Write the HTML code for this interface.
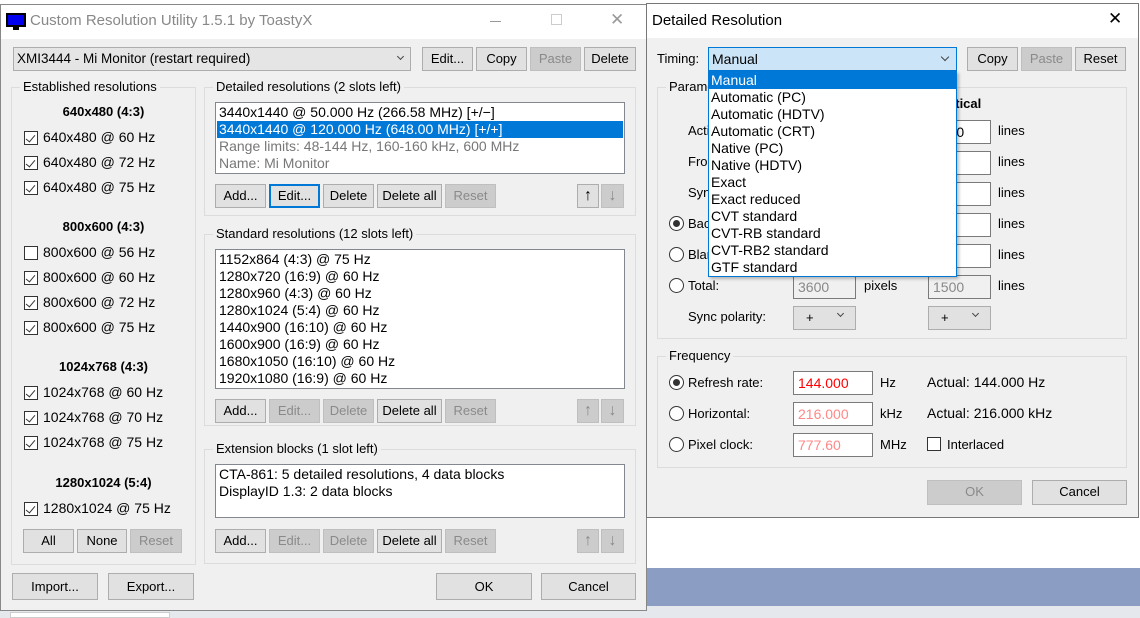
<!DOCTYPE html>
<html><head><meta charset="utf-8"><style>
*{box-sizing:border-box;margin:0;padding:0}
body{width:1140px;height:618px;overflow:hidden;position:relative;background:#fff;font-family:"Liberation Sans",sans-serif;font-size:13px;color:#000}
.a{position:absolute;white-space:nowrap}
.n{font-size:14px}
.win{position:absolute;background:#f0f0f0;border:1px solid #888}
.tb{position:absolute;left:0;right:0;top:0;background:#fff}
.btn{position:absolute;background:#e1e1e1;border:1px solid #adadad;text-align:center;line-height:22px;height:24px}
.dis{background:#ccc;border-color:#bfbfbf;color:#8a8a8a}
.grp{position:absolute;border:1px solid #dcdcdc}
.gl{position:absolute;background:#f0f0f0;padding:0 3px;top:-9px;left:8px;line-height:16px}
.list{position:absolute;background:#fff;border:1px solid #828790}
.cb{position:absolute;width:14px;height:14px;border:1px solid #333;background:#fff}
.cb.k::after{content:"";position:absolute;left:3px;top:1px;width:4px;height:8px;border:solid #333;border-width:0 1.3px 1.3px 0;transform:rotate(40deg)}
.rad{position:absolute;width:15px;height:15px;border:1px solid #333;border-radius:50%;background:#fff}
.rad.on::after{content:"";position:absolute;left:3px;top:3px;width:7px;height:7px;border-radius:50%;background:#333}
.tx{position:absolute;background:#fff;border:1px solid #7a7a7a;height:24px;line-height:22px;padding-left:4px;font-size:14px}
.b{font-weight:bold}
.chev{position:absolute;width:7px;height:7px;border:solid #444;border-width:0 1px 1px 0;transform:rotate(45deg)}
.ar{font-size:16px;font-weight:bold}
</style></head><body>
<div class="a" style="left:646px;top:568px;width:494px;height:38px;background:#8b9dc3"></div>
<div class="a" style="left:646px;top:606px;width:494px;height:12px;background:#e5e8ec"></div>
<div class="a" style="left:0;top:610px;width:646px;height:8px;background:#e5e8ec"></div>
<div class="a" style="left:10px;top:612px;width:160px;height:6px;background:#fff;border:1px solid #ccc"></div>

<div class="win" style="left:0;top:4px;width:647px;height:607px">
 <div class="tb" style="height:34px"></div>
 <div class="a" style="left:5px;top:8px;width:20px;height:14px;background:#0000ee;border:2px solid #000"></div>
 <div class="a" style="left:12px;top:22px;width:6px;height:3px;background:#000"></div>
 <div class="a" style="left:29px;top:7px;font-size:15px;color:#888">Custom Resolution Utility 1.5.1 by ToastyX</div>
 <div class="a" style="left:489px;top:16px;width:11px;height:1px;background:#999"></div>
 <div class="a" style="left:550px;top:9px;width:11px;height:11px;border:1px solid #ccc"></div>
 <div class="a" style="left:609px;top:5px;font-size:17px;color:#999">✕</div>
</div>
<div class="a" style="left:13px;top:47px;width:398px;height:24px;background:#e5e5e5;border:1px solid #adadad;line-height:22px;padding-left:3px;font-size:13.5px">XMI3444 - Mi Monitor (restart required)</div>
<div class="chev" style="left:398px;top:54px;width:5px;height:5px"></div>
<div class="btn" style="left:422px;top:47px;width:51px">Edit...</div>
<div class="btn" style="left:476px;top:47px;width:51px">Copy</div>
<div class="btn dis" style="left:530px;top:47px;width:51px">Paste</div>
<div class="btn" style="left:584px;top:47px;width:52px">Delete</div>

<div class="grp" style="left:11px;top:87px;width:185px;height:478px"><div class="gl">Established resolutions</div></div>
<div class="a b" style="left:11px;width:185px;text-align:center;top:104px">640x480 (4:3)</div>
<div class="cb k" style="left:24px;top:131px"></div><div class="a n" style="left:43px;top:129px">640x480 @ 60 Hz</div>
<div class="cb k" style="left:24px;top:156px"></div><div class="a n" style="left:43px;top:154px">640x480 @ 72 Hz</div>
<div class="cb k" style="left:24px;top:181px"></div><div class="a n" style="left:43px;top:179px">640x480 @ 75 Hz</div>
<div class="a b" style="left:11px;width:185px;text-align:center;top:219px">800x600 (4:3)</div>
<div class="cb" style="left:24px;top:246px"></div><div class="a n" style="left:43px;top:244px">800x600 @ 56 Hz</div>
<div class="cb k" style="left:24px;top:271px"></div><div class="a n" style="left:43px;top:269px">800x600 @ 60 Hz</div>
<div class="cb k" style="left:24px;top:296px"></div><div class="a n" style="left:43px;top:294px">800x600 @ 72 Hz</div>
<div class="cb k" style="left:24px;top:321px"></div><div class="a n" style="left:43px;top:319px">800x600 @ 75 Hz</div>
<div class="a b" style="left:11px;width:185px;text-align:center;top:359px">1024x768 (4:3)</div>
<div class="cb k" style="left:24px;top:386px"></div><div class="a n" style="left:43px;top:384px">1024x768 @ 60 Hz</div>
<div class="cb k" style="left:24px;top:411px"></div><div class="a n" style="left:43px;top:409px">1024x768 @ 70 Hz</div>
<div class="cb k" style="left:24px;top:436px"></div><div class="a n" style="left:43px;top:434px">1024x768 @ 75 Hz</div>
<div class="a b" style="left:11px;width:185px;text-align:center;top:475px">1280x1024 (5:4)</div>
<div class="cb k" style="left:24px;top:502px"></div><div class="a n" style="left:43px;top:500px">1280x1024 @ 75 Hz</div>
<div class="btn" style="left:23px;top:529px;width:51px">All</div>
<div class="btn" style="left:77px;top:529px;width:50px">None</div>
<div class="btn dis" style="left:130px;top:529px;width:52px">Reset</div>

<div class="grp" style="left:204px;top:87px;width:432px;height:129px"><div class="gl">Detailed resolutions (2 slots left)</div></div>
<div class="list" style="left:215px;top:102px;width:410px;height:72px"></div>
<div class="a n" style="left:219px;top:104px">3440x1440 @ 50.000 Hz (266.58 MHz) [+/−]</div>
<div class="a" style="left:217px;top:121px;width:406px;height:17px;background:#0078d7"></div>
<div class="a n" style="left:219px;top:121px;color:#fff">3440x1440 @ 120.000 Hz (648.00 MHz) [+/+]</div>
<div class="a n" style="left:219px;top:138px;color:#777">Range limits: 48-144 Hz, 160-160 kHz, 600 MHz</div>
<div class="a n" style="left:219px;top:155px;color:#777">Name: Mi Monitor</div>
<div class="btn" style="left:215px;top:184px;width:51px">Add...</div>
<div class="btn" style="left:269px;top:184px;width:51px;border:2px solid #0078d7;line-height:20px">Edit...</div>
<div class="btn" style="left:323px;top:184px;width:51px">Delete</div>
<div class="btn" style="left:377px;top:184px;width:65px">Delete all</div>
<div class="btn dis" style="left:445px;top:184px;width:51px">Reset</div>
<div class="btn ar" style="left:577px;top:184px;width:22px">↑</div>
<div class="btn dis ar" style="left:601px;top:184px;width:23px">↓</div>

<div class="grp" style="left:204px;top:234px;width:432px;height:192px"><div class="gl">Standard resolutions (12 slots left)</div></div>
<div class="list" style="left:215px;top:249px;width:410px;height:140px"></div>
<div class="a n" style="left:219px;top:251px;line-height:17px">1152x864 (4:3) @ 75 Hz<br>1280x720 (16:9) @ 60 Hz<br>1280x960 (4:3) @ 60 Hz<br>1280x1024 (5:4) @ 60 Hz<br>1440x900 (16:10) @ 60 Hz<br>1600x900 (16:9) @ 60 Hz<br>1680x1050 (16:10) @ 60 Hz<br>1920x1080 (16:9) @ 60 Hz</div>
<div class="btn" style="left:215px;top:399px;width:51px">Add...</div>
<div class="btn dis" style="left:269px;top:399px;width:51px">Edit...</div>
<div class="btn dis" style="left:323px;top:399px;width:51px">Delete</div>
<div class="btn" style="left:377px;top:399px;width:65px">Delete all</div>
<div class="btn dis" style="left:445px;top:399px;width:51px">Reset</div>
<div class="btn dis ar" style="left:577px;top:399px;width:22px">↑</div>
<div class="btn dis ar" style="left:601px;top:399px;width:23px">↓</div>

<div class="grp" style="left:204px;top:449px;width:432px;height:115px"><div class="gl">Extension blocks (1 slot left)</div></div>
<div class="list" style="left:215px;top:464px;width:410px;height:54px"></div>
<div class="a n" style="left:219px;top:466px;line-height:17px">CTA-861: 5 detailed resolutions, 4 data blocks<br>DisplayID 1.3: 2 data blocks</div>
<div class="btn" style="left:215px;top:529px;width:51px">Add...</div>
<div class="btn dis" style="left:269px;top:529px;width:51px">Edit...</div>
<div class="btn dis" style="left:323px;top:529px;width:51px">Delete</div>
<div class="btn" style="left:377px;top:529px;width:65px">Delete all</div>
<div class="btn dis" style="left:445px;top:529px;width:51px">Reset</div>
<div class="btn dis ar" style="left:577px;top:529px;width:22px">↑</div>
<div class="btn dis ar" style="left:601px;top:529px;width:23px">↓</div>

<div class="btn" style="left:12px;top:573px;width:86px;height:27px;line-height:25px">Import...</div>
<div class="btn" style="left:108px;top:573px;width:86px;height:27px;line-height:25px">Export...</div>
<div class="btn" style="left:436px;top:573px;width:96px;height:27px;line-height:25px">OK</div>
<div class="btn" style="left:541px;top:573px;width:95px;height:27px;line-height:25px">Cancel</div>

<div class="win" style="left:646px;top:3px;width:493px;height:515px;border-color:#777">
 <div class="tb" style="height:34px"></div>
 <div class="a" style="left:5px;top:8px;font-size:15px">Detailed Resolution</div>
 <div class="a" style="left:461px;top:5px;font-size:17px">✕</div>
</div>
<div class="a" style="left:657px;top:51px">Timing:</div>
<div class="a" style="left:708px;top:47px;width:249px;height:24px;background:#cce4f7;border:1px solid #0078d7;line-height:22px;padding-left:3px;font-size:14px">Manual</div>
<div class="chev" style="left:942px;top:54px;width:6px;height:6px"></div>
<div class="btn" style="left:967px;top:47px;width:51px">Copy</div>
<div class="btn dis" style="left:1021px;top:47px;width:51px">Paste</div>
<div class="btn" style="left:1075px;top:47px;width:51px">Reset</div>

<div class="grp" style="left:657px;top:87px;width:470px;height:252px"><div class="gl">Parameters</div></div>
<div class="a b" style="left:935px;top:96px">Vertical</div>
<div class="a" style="left:688px;top:123px">Active:</div>
<div class="a" style="left:688px;top:154px">Front porch:</div>
<div class="a" style="left:688px;top:185px">Sync width:</div>
<div class="rad on" style="left:669px;top:216px"></div><div class="a" style="left:688px;top:216px">Back porch:</div>
<div class="rad" style="left:669px;top:247px"></div><div class="a" style="left:688px;top:247px">Blanking:</div>
<div class="tx" style="left:928px;top:120px;width:63px">1440</div><div class="a" style="left:998px;top:123px">lines</div>
<div class="tx" style="left:928px;top:151px;width:63px"></div><div class="a" style="left:998px;top:154px">lines</div>
<div class="tx" style="left:928px;top:182px;width:63px"></div><div class="a" style="left:998px;top:185px">lines</div>
<div class="tx" style="left:928px;top:213px;width:63px"></div><div class="a" style="left:998px;top:216px">lines</div>
<div class="tx" style="left:928px;top:244px;width:63px"></div><div class="a" style="left:998px;top:247px">lines</div>
<div class="rad" style="left:669px;top:278px"></div><div class="a" style="left:688px;top:278px">Total:</div>
<div class="tx" style="left:793px;top:275px;width:63px;color:#888;background:#f0f0f0">3600</div><div class="a" style="left:864px;top:278px">pixels</div>
<div class="tx" style="left:928px;top:275px;width:63px;color:#888;background:#f0f0f0">1500</div><div class="a" style="left:998px;top:278px">lines</div>
<div class="a" style="left:688px;top:309px">Sync polarity:</div>
<div class="btn" style="left:793px;top:306px;width:63px;text-align:left;padding-left:12px">+</div><div class="chev" style="left:838px;top:311px;width:5px;height:5px"></div>
<div class="btn" style="left:928px;top:306px;width:63px;text-align:left;padding-left:12px">+</div><div class="chev" style="left:973px;top:311px;width:5px;height:5px"></div>

<div class="grp" style="left:657px;top:356px;width:470px;height:112px"><div class="gl">Frequency</div></div>
<div class="rad on" style="left:669px;top:375px"></div><div class="a" style="left:688px;top:375px">Refresh rate:</div>
<div class="tx" style="left:793px;top:371px;width:80px;color:#f00">144.000</div><div class="a" style="left:880px;top:375px">Hz</div><div class="a n" style="left:927px;top:374px">Actual: 144.000 Hz</div>
<div class="rad" style="left:669px;top:406px"></div><div class="a" style="left:688px;top:406px">Horizontal:</div>
<div class="tx" style="left:793px;top:402px;width:80px;color:#f88">216.000</div><div class="a" style="left:880px;top:406px">kHz</div><div class="a n" style="left:927px;top:405px">Actual: 216.000 kHz</div>
<div class="rad" style="left:669px;top:437px"></div><div class="a" style="left:688px;top:437px">Pixel clock:</div>
<div class="tx" style="left:793px;top:433px;width:80px;color:#f88">777.60</div><div class="a" style="left:880px;top:437px">MHz</div>
<div class="cb" style="left:927px;top:437px"></div><div class="a" style="left:947px;top:437px">Interlaced</div>
<div class="btn dis" style="left:927px;top:480px;width:95px;height:25px">OK</div>
<div class="btn" style="left:1032px;top:480px;width:95px;height:25px">Cancel</div>

<div class="a" style="left:708px;top:71px;width:249px;height:206px;background:#fff;border:1px solid #0078d7;box-shadow:2px 2px 3px rgba(0,0,0,.25)"></div>
<div class="a" style="left:709px;top:72px;width:247px;height:17px;background:#0078d7"></div>
<div class="a" style="left:711px;top:72px;line-height:17px;font-size:14px"><span style="color:#fff">Manual</span><br>Automatic (PC)<br>Automatic (HDTV)<br>Automatic (CRT)<br>Native (PC)<br>Native (HDTV)<br>Exact<br>Exact reduced<br>CVT standard<br>CVT-RB standard<br>CVT-RB2 standard<br>GTF standard</div>
</body></html>
